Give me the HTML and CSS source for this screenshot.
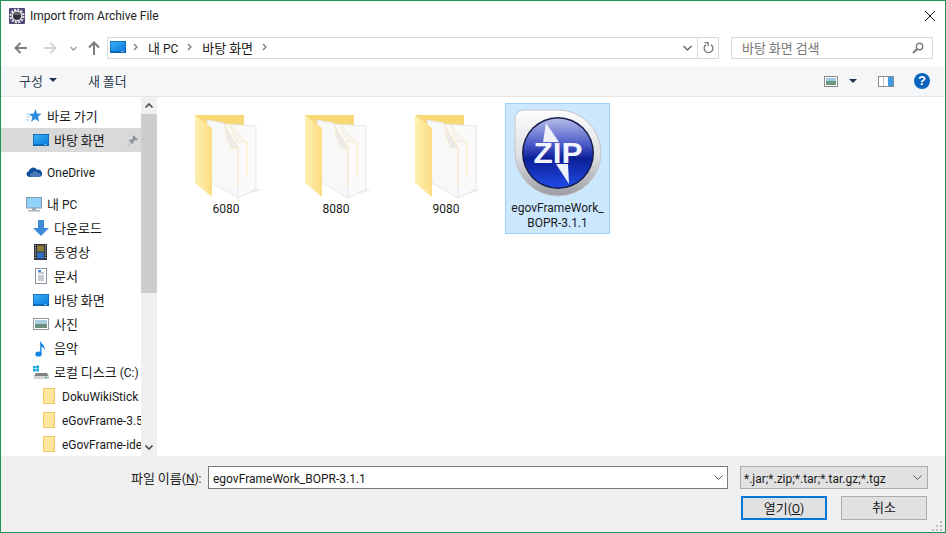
FILE: index.html
```html
<!DOCTYPE html>
<html>
<head>
    <meta charset="utf-8">
    <title>Import from Archive File</title>
    <link rel="stylesheet" href="styles.css">
</head>
<body>
    <svg class="defs" width="0" height="0">
        <defs>
            <linearGradient id="deskFill" x1="0" y1="0" x2="1" y2="1">
                <stop offset="0" stop-color="#39b3f5"/>
                <stop offset="1" stop-color="#0a78dc"/>
            </linearGradient>
            <linearGradient id="flap" x1="0" y1="0" x2="1" y2="0">
                <stop offset="0" stop-color="#fff0b0"/>
                <stop offset="1" stop-color="#fcdc84"/>
            </linearGradient>
            <linearGradient id="ring" x1="0" y1="0" x2="0" y2="1">
                <stop offset="0" stop-color="#fdfdfd"/>
                <stop offset="0.55" stop-color="#dcdde0"/>
                <stop offset="1" stop-color="#9b9ca3"/>
            </linearGradient>
            <linearGradient id="disc" x1="0" y1="0" x2="0" y2="1">
                <stop offset="0" stop-color="#b4bbe8"/>
                <stop offset="0.38" stop-color="#4a59c8"/>
                <stop offset="0.58" stop-color="#0c1f96"/>
                <stop offset="1" stop-color="#1f4ae6"/>
            </linearGradient>
            <symbol id="desk" viewBox="0 0 16 12">
                <rect x="0" y="0" width="16" height="12" fill="#0a5fa8"/>
                <rect x="0.7" y="0.7" width="14.6" height="9.6" fill="url(#deskFill)"/>
                <rect x="0.7" y="10.3" width="14.6" height="1" fill="#0d6dbd"/>
                <rect x="11" y="10.5" width="3" height="0.6" fill="#e8f4ff"/>
            </symbol>
            <symbol id="smallFolder" viewBox="0 0 12 16">
                <rect x="0.5" y="0.5" width="11" height="15" fill="#fde79f" stroke="#eec75f"/>
                <rect x="10" y="11" width="2" height="5" fill="#f7d26f"/>
            </symbol>
            <symbol id="bigFolder" viewBox="-4 0 70 84" overflow="visible">
                <path d="M0 0 H49 V14 H0 Z" fill="#f8d775"/>
                <path d="M28 9 L61 11 V74 L43 83 Z" fill="#fafafa" stroke="#e6e6e6"/>
                <path d="M61 74 L66 75 L50 80 Z" fill="#ececec"/>
                <path d="M52 27 V62" stroke="#fbecbd"/>
                <path d="M34 8 L51 27 L42 27 Z" fill="#f4f4f4" stroke="#f9e6b0" stroke-width="0.6"/>
                <path d="M12 5 L28 8 L43 33 V83 L17 68 Z" fill="#f8f8f9" stroke="#e8e8e8"/>
                <path d="M30 11 L43 33 H36 L31 21 Z" fill="#ebebeb" stroke="#f9e6b0" stroke-width="0.6"/>
                <path d="M43 33 V72" stroke="#fbecbd"/>
                <path d="M0 0 L17 13 V82 L0 68 Z" fill="url(#flap)"/>
            </symbol>
        </defs>
    </svg>

    <div class="window">
        <header class="titlebar">
            <svg class="app-icon" width="16" height="16" viewBox="0 0 16 16">
                <rect width="16" height="16" rx="1" fill="#53477a"/>
                <circle cx="8" cy="8" r="6.4" fill="none" stroke="#e6e6e6" stroke-width="2" stroke-dasharray="2 1.3"/>
                <circle cx="8" cy="8" r="5.4" fill="#e6e6e6"/>
                <circle cx="8" cy="8" r="4" fill="#35303c"/>
                <path d="M4.8 7 a3.4 3.4 0 0 1 6.4 0 z" fill="#6d6a78"/>
            </svg>
            <span class="window-title">Import from Archive File</span>
            <svg class="close-icon" width="10" height="10" viewBox="0 0 10 10">
                <path d="M0 0 L10 10 M10 0 L0 10" stroke="#111" stroke-width="1"/>
            </svg>
        </header>

        <nav class="navbar">
            <div class="nav-buttons">
                <svg class="nav-back" width="13" height="12" viewBox="0 0 13 12"><path d="M13 6 H2 M6.5 1 L1.5 6 L6.5 11" fill="none" stroke="#7d7d7d" stroke-width="2"/></svg>
                <svg class="nav-forward" width="13" height="12" viewBox="0 0 13 12"><path d="M0 6 H11 M6.5 1 L11.5 6 L6.5 11" fill="none" stroke="#d4d4d4" stroke-width="2"/></svg>
                <svg class="nav-chevron" width="7" height="5" viewBox="0 0 7 5"><path d="M0.5 1 L3.5 4 L6.5 1" fill="none" stroke="#9a9a9a" stroke-width="1.3"/></svg>
                <svg class="nav-up" width="12" height="14" viewBox="0 0 12 14"><path d="M6 14 V2 M1 6.5 L6 1.5 L11 6.5" fill="none" stroke="#7d7d7d" stroke-width="2"/></svg>
            </div>
            <div class="address">
                <svg class="address-icon" width="16" height="12"><use href="#desk"/></svg>
                <svg class="crumb-sep" width="5" height="8" viewBox="0 0 5 8"><path d="M1 1 L4 4 L1 7" fill="none" stroke="#7a7a7a" stroke-width="1.3"/></svg>
                <span class="crumb"><span class="ko">내</span> PC</span>
                <svg class="crumb-sep" width="5" height="8" viewBox="0 0 5 8"><path d="M1 1 L4 4 L1 7" fill="none" stroke="#7a7a7a" stroke-width="1.3"/></svg>
                <span class="crumb ko">바탕 화면</span>
                <svg class="crumb-sep" width="5" height="8" viewBox="0 0 5 8"><path d="M1 1 L4 4 L1 7" fill="none" stroke="#7a7a7a" stroke-width="1.3"/></svg>
                <span class="address-fill"></span>
                <svg class="address-drop" width="9" height="6" viewBox="0 0 9 6"><path d="M0.5 1 L4.5 5 L8.5 1" fill="none" stroke="#666" stroke-width="1.4"/></svg>
                <span class="address-refresh">
                    <svg width="11" height="12" viewBox="0 0 11 12"><path d="M3 2.6 A4.4 4.4 0 1 0 8 2.6" fill="none" stroke="#777" stroke-width="1.3"/><path d="M1.6 0.6 H5.2 V4.2" fill="none" stroke="#777" stroke-width="1.2"/></svg>
                </span>
            </div>
            <div class="search">
                <span class="search-text ko">바탕 화면 검색</span>
                <svg width="12" height="12" viewBox="0 0 12 12"><circle cx="7.5" cy="4.5" r="3.2" fill="none" stroke="#7a7a7a" stroke-width="1.4"/><path d="M5 7 L1 11" stroke="#7a7a7a" stroke-width="2"/></svg>
            </div>
        </nav>

        <div class="toolbar">
            <span class="tool ko">구성<i class="caret"></i></span>
            <span class="tool tool-new ko">새 폴더</span>
            <span class="toolbar-fill"></span>
            <svg class="view-icon" width="14" height="11" viewBox="0 0 14 11">
                <rect x="0.5" y="0.5" width="13" height="10" fill="#fff" stroke="#8c8c8c"/>
                <rect x="2" y="2" width="10" height="3" fill="#9fc9e8"/>
                <rect x="2" y="5" width="10" height="4" fill="#6f9a82"/>
            </svg>
            <i class="caret view-caret"></i>
            <svg class="pane-icon" width="16" height="11" viewBox="0 0 16 11">
                <rect x="0.5" y="0.5" width="15" height="10" fill="#fff" stroke="#8c8c8c"/>
                <rect x="10" y="1" width="5" height="9" fill="#3f9be0"/>
                <path d="M5.5 1 V10" stroke="#c4c4c4"/>
            </svg>
            <svg class="help-icon" width="16" height="16" viewBox="0 0 16 16">
                <circle cx="8" cy="8" r="8" fill="#0c63bd"/>
                <text x="8" y="12.4" text-anchor="middle" class="help-mark">?</text>
            </svg>
        </div>

        <div class="content">
            <aside class="sidebar">
                <ul class="tree">
                    <li class="tree-row level-0">
                        <svg class="tree-icon" width="16" height="16" viewBox="0 0 16 16"><path d="M9.5 1 L11 5.6 L15.6 5.8 L12 8.8 L13.2 13.6 L9.2 11 L5 13.8 L6.4 9 L3 6 L7.8 5.6 Z" fill="#2b8ee0"/><path d="M0.5 6 H3 M0.5 9 H4 M0.5 12 H3" stroke="#9ccbf0"/></svg>
                        <span class="label-ko ko">바로 가기</span>
                    </li>
                    <li class="tree-row level-1 selected">
                        <svg class="tree-icon" width="16" height="12"><use href="#desk"/></svg>
                        <span class="grow label-ko ko">바탕 화면</span>
                        <svg class="pin" width="11" height="11" viewBox="0 0 11 11"><path d="M6.5 0.5 L10.5 4.5 L9.5 5 L8 4.6 L5.8 7 L5.6 9 L2 5.4 L4 5.2 L6.4 3 L6 1.5 Z M3.5 7.5 L0.5 10.5" fill="#8a8f96" stroke="#8a8f96" stroke-width="0.6"/></svg>
                    </li>
                    <li class="tree-row level-0 group">
                        <svg class="tree-icon" width="16" height="10" viewBox="0 0 16 10"><path d="M3 10 A3 3 0 0 1 2.6 4.2 A4.6 4.6 0 0 1 11 2.8 A3.6 3.6 0 0 1 13.4 10 Z" fill="#0f4d9c"/><path d="M5 10 A2.4 2.4 0 0 1 6.4 5.6 A3.4 3.4 0 0 1 12 6 A2.2 2.2 0 0 1 13.6 10 Z" fill="#fff" opacity="0.25"/></svg>
                        <span class="label-latin">OneDrive</span>
                    </li>
                    <li class="tree-row level-0 group">
                        <svg class="tree-icon" width="16" height="15" viewBox="0 0 16 15"><rect x="0.5" y="0.5" width="15" height="10.5" fill="#8fd2fa" stroke="#8a9aa8"/><rect x="6" y="11" width="4" height="2" fill="#9aa7b2"/><rect x="2" y="13" width="12" height="1.6" fill="#aeb8c1"/></svg>
                        <span class="label-ko"><span class="ko">내</span> PC</span>
                    </li>
                    <li class="tree-row level-1">
                        <svg class="tree-icon" width="16" height="16" viewBox="0 0 16 16"><path d="M5 0 H11 V8 H16 L8 16 L0 8 H5 Z" fill="#3c8ad8"/></svg>
                        <span class="label-ko ko">다운로드</span>
                    </li>
                    <li class="tree-row level-1">
                        <svg class="tree-icon" width="16" height="16" viewBox="0 0 16 16"><rect x="1" y="0" width="13" height="16" fill="#2d3338"/><rect x="4" y="1.5" width="7" height="6" fill="#8c7a3a"/><rect x="4" y="8.5" width="7" height="6" fill="#2d6fc0"/><path d="M2.5 1 V15 M12.5 1 V15" stroke="#cfd3d6" stroke-dasharray="1 1.4"/></svg>
                        <span class="label-ko ko">동영상</span>
                    </li>
                    <li class="tree-row level-1">
                        <svg class="tree-icon" width="16" height="16" viewBox="0 0 16 16"><rect x="2.5" y="0.5" width="11" height="15" fill="#fff" stroke="#8b96a0"/><path d="M5 5 H11 M5 8 H11 M5 10 H11 M5 12 H11" stroke="#8b9aa8"/><rect x="5" y="2" width="3" height="2" fill="#4a90d8"/></svg>
                        <span class="label-ko ko">문서</span>
                    </li>
                    <li class="tree-row level-1">
                        <svg class="tree-icon" width="16" height="12"><use href="#desk"/></svg>
                        <span class="label-ko ko">바탕 화면</span>
                    </li>
                    <li class="tree-row level-1">
                        <svg class="tree-icon" width="16" height="12" viewBox="0 0 16 12"><rect x="0.5" y="0.5" width="15" height="11" fill="#fff" stroke="#999"/><rect x="2" y="2" width="12" height="4" fill="#a9cde0"/><rect x="2" y="6" width="12" height="4" fill="#6d8f7f"/></svg>
                        <span class="label-ko ko">사진</span>
                    </li>
                    <li class="tree-row level-1">
                        <svg class="tree-icon" width="16" height="17" viewBox="0 0 16 17"><ellipse cx="5.5" cy="14" rx="3.2" ry="2.6" fill="#1482e0"/><path d="M7.2 14 V0.5 C8 4 12.5 5 11.5 10 C10.8 7.6 9.2 6.8 8.6 6.6 V14 Z" fill="#1482e0"/></svg>
                        <span class="label-ko ko">음악</span>
                    </li>
                    <li class="tree-row level-1">
                        <svg class="tree-icon" width="16" height="16" viewBox="0 0 16 16"><path d="M0 2 H2.6 V4.4 H0 Z M3.2 1.6 H6 V4.4 H3.2 Z M0 5 H2.6 V7.4 H0 Z M3.2 5 H6 V7.6 H3.2 Z" fill="#12a3e8"/><path d="M3 9 H14 L15.6 12 V15 H1 V12 Z" fill="#7d8287"/><path d="M1 12 H15.6 V15 H1 Z" fill="#d2d4d6"/><rect x="12" y="13" width="2" height="1" fill="#39b54a"/></svg>
                        <span class="label-ko"><span class="ko">로컬 디스크</span> (C:)</span>
                    </li>
                    <li class="tree-row level-2">
                        <svg class="tree-icon" width="12" height="16"><use href="#smallFolder"/></svg>
                        <span class="label-latin">DokuWikiStick</span>
                    </li>
                    <li class="tree-row level-2">
                        <svg class="tree-icon" width="12" height="16"><use href="#smallFolder"/></svg>
                        <span class="label-latin">eGovFrame-3.5</span>
                    </li>
                    <li class="tree-row level-2">
                        <svg class="tree-icon" width="12" height="16"><use href="#smallFolder"/></svg>
                        <span class="label-latin">eGovFrame-ide</span>
                    </li>
                </ul>
            </aside>
            <div class="scrollbar">
                <span class="scroll-btn">
                    <svg width="8" height="5" viewBox="0 0 8 5"><path d="M0.5 4.5 L4 1 L7.5 4.5" fill="none" stroke="#505050" stroke-width="1.6"/></svg>
                </span>
                <span class="scroll-thumb"></span>
                <span class="scroll-track"></span>
                <span class="scroll-btn">
                    <svg width="8" height="5" viewBox="0 0 8 5"><path d="M0.5 0.5 L4 4 L7.5 0.5" fill="none" stroke="#505050" stroke-width="1.6"/></svg>
                </span>
            </div>
            <main class="files">
                <div class="tile">
                    <svg class="tile-folder" width="70" height="84"><use href="#bigFolder"/></svg>
                    <span class="tile-name">6080</span>
                </div>
                <div class="tile">
                    <svg class="tile-folder" width="70" height="84"><use href="#bigFolder"/></svg>
                    <span class="tile-name">8080</span>
                </div>
                <div class="tile">
                    <svg class="tile-folder" width="70" height="84"><use href="#bigFolder"/></svg>
                    <span class="tile-name">9080</span>
                </div>
                <div class="tile tile-selected">
                    <svg class="tile-zip" width="90" height="90" viewBox="0 0 90 90">
                        <path d="M11 2 H45 A43 43 0 1 1 2 45 V11 A9 9 0 0 1 11 2 Z" fill="url(#ring)" stroke="#c4c5c9"/>
                        <circle cx="45" cy="45" r="36" fill="#171c4a"/>
                        <circle cx="45" cy="45" r="34.5" fill="url(#disc)"/>
                        <path d="M33 15 L46 34 H30 Z" fill="#eef0fa"/>
                        <path d="M43 56 H55 L56 76 Z" fill="#eef0fa"/>
                        <text x="45" y="55" text-anchor="middle" textLength="49" lengthAdjust="spacingAndGlyphs" class="zip-mark">ZIP</text>
                    </svg>
                    <span class="tile-name">egovFrameWork_<br>BOPR-3.1.1</span>
                </div>
            </main>
        </div>

        <footer class="footer">
            <div class="footer-row">
                <label class="file-label"><span class="ko">파일 이름</span>(<u>N</u>):</label>
                <div class="file-input">
                    <span class="grow field-text">egovFrameWork_BOPR-3.1.1</span>
                    <svg width="9" height="5" viewBox="0 0 9 5"><path d="M0.5 0.5 L4.5 4.5 L8.5 0.5" fill="none" stroke="#555"/></svg>
                </div>
                <div class="file-filter">
                    <span class="grow field-text">*.jar;*.zip;*.tar;*.tar.gz;*.tgz</span>
                    <svg width="9" height="5" viewBox="0 0 9 5"><path d="M0.5 0.5 L4.5 4.5 L8.5 0.5" fill="none" stroke="#555"/></svg>
                </div>
            </div>
            <div class="footer-actions">
                <button class="btn btn-default"><span class="ko">열기</span>(<u>O</u>)</button>
                <button class="btn"><span class="ko">취소</span></button>
            </div>
            <svg class="grip" width="11" height="11" viewBox="0 0 11 11">
                <path d="M8 0 h2 v2 h-2 z M4 4 h2 v2 h-2 z M8 4 h2 v2 h-2 z M0 8 h2 v2 h-2 z M4 8 h2 v2 h-2 z M8 8 h2 v2 h-2 z" fill="#bdbdbd"/>
            </svg>
        </footer>
    </div>
</body>
</html>
```

FILE: styles.css
```css
* {
    margin: 0;
    padding: 0;
    box-sizing: border-box;
}

html, body {
    width: 946px;
    height: 533px;
    overflow: hidden;
}

body {
    font-family: Roboto, "Noto Sans CJK KR", sans-serif;
    font-size: 12px;
    color: #1a1a1a;
    background: #fff;
}

svg {
    flex: none;
}

/* hangul runs a size up, latin stays at 12px */
.ko {
    font-family: "Noto Sans CJK KR", sans-serif;
    font-size: 13px;
}

.defs {
    display: block;
    height: 0;
}

.grow {
    flex: 1;
    min-width: 0;
}

.window {
    width: 946px;
    height: 533px;
    display: flex;
    flex-direction: column;
    border: 1px solid #1f9255;
    background: #fff;
}

/* title bar */
.titlebar {
    height: 32px;
    flex: none;
    display: flex;
    align-items: center;
    padding: 0 10px 2px 8px;
}

.app-icon {
    margin-right: 5px;
}

.window-title {
    flex: 1;
    color: #222;
}

/* address row */
.navbar {
    height: 33px;
    flex: none;
    display: flex;
    align-items: flex-start;
    padding-top: 4px;
}

.nav-buttons {
    width: 106px;
    height: 22px;
    flex: none;
    display: flex;
    align-items: center;
    padding-left: 13px;
}

.nav-forward {
    margin-left: 17px;
}

.nav-chevron {
    margin-left: 13px;
}

.nav-up {
    margin-left: 11px;
}

.address {
    width: 612px;
    height: 22px;
    flex: none;
    display: flex;
    align-items: center;
    border: 1px solid #d9d9d9;
    padding-left: 2px;
}

.address-icon {
    margin-right: 7px;
    margin-bottom: 2px;
}

.crumb-sep {
    margin-right: 10px;
    margin-bottom: 2px;
}

.crumb {
    margin-right: 9px;
    margin-bottom: 2px;
    white-space: nowrap;
}

.address-fill {
    flex: 1;
}

.address-drop {
    margin-right: 5px;
}

.address-refresh {
    width: 21px;
    height: 100%;
    display: flex;
    align-items: center;
    justify-content: center;
    border-left: 1px solid #d9d9d9;
}

.search {
    width: 202px;
    height: 22px;
    flex: none;
    margin-left: 12px;
    display: flex;
    align-items: center;
    justify-content: space-between;
    border: 1px solid #d9d9d9;
    padding: 0 8px 0 10px;
    color: #777;
}

.search-text {
    margin-bottom: 2px;
}

/* command bar */
.toolbar {
    height: 31px;
    flex: none;
    display: flex;
    align-items: center;
    background: #f5f6f7;
    border-bottom: 1px solid #e6e6e6;
    padding-left: 18px;
    padding-right: 15px;
    color: #2f3d4f;
}

.tool {
    display: flex;
    align-items: center;
    margin-bottom: 2px;
}

.caret {
    display: block;
    width: 0;
    height: 0;
    margin-left: 6px;
    border-left: 4px solid transparent;
    border-right: 4px solid transparent;
    border-top: 4px solid #1f3553;
}

.tool-new {
    margin-left: 31px;
}

.toolbar-fill {
    flex: 1;
}

.view-caret {
    margin-left: 11px;
}

.pane-icon {
    margin-left: 21px;
}

.help-icon {
    margin-left: 20px;
}

.help-mark {
    font-family: "Liberation Sans", sans-serif;
    font-size: 13px;
    font-weight: 700;
    fill: #fff;
}

/* main area */
.content {
    flex: 1;
    min-height: 0;
    display: flex;
}

.sidebar {
    width: 140px;
    flex: none;
    overflow: hidden;
    padding-top: 7px;
}

.tree {
    list-style: none;
}

.tree-row {
    height: 24px;
    display: flex;
    align-items: center;
    white-space: nowrap;
}

.label-ko {
    padding-bottom: 2px;
}

.label-latin {
    padding-top: 2px;
}

.tree-row.group {
    margin-top: 8px;
}

.tree-row.level-0 {
    padding-left: 25px;
}

.tree-row.level-1 {
    padding-left: 32px;
}

.tree-row.level-2 {
    padding-left: 42px;
}

.tree-row .tree-icon {
    margin-right: 5px;
}

.tree-row.level-2 .tree-icon {
    margin-right: 7px;
}

.tree-row.selected {
    background: #d9d9d9;
}

.pin {
    margin-right: 3px;
}

.scrollbar {
    width: 16px;
    flex: none;
    display: flex;
    flex-direction: column;
    background: #f0f0f0;
}

.scroll-btn {
    height: 17px;
    flex: none;
    display: flex;
    align-items: center;
    justify-content: center;
}

.scroll-thumb {
    height: 179px;
    flex: none;
    background: #cdcdcd;
}

.scroll-track {
    flex: 1;
}

.files {
    flex: 1;
    min-width: 0;
    display: flex;
    align-items: flex-start;
    gap: 6px;
    padding: 6px 0 0 17px;
}

.tile {
    width: 104px;
    height: 131px;
    flex: none;
    display: flex;
    flex-direction: column;
    align-items: center;
    border: 1px solid transparent;
    text-align: center;
    line-height: 16px;
}

.tile-folder {
    margin-top: 11px;
    margin-bottom: 2px;
    overflow: visible;
}

.tile-selected {
    width: 105px;
    margin-left: 1px;
    background: #cce8ff;
    border-color: #99d1ff;
    line-height: 15px;
}

.tile-zip {
    margin-top: 4px;
    margin-bottom: 3px;
}

.zip-mark {
    font-family: "Liberation Sans", sans-serif;
    font-size: 29px;
    font-weight: 700;
    fill: #f2f4ff;
}

/* file name and buttons */
.footer {
    position: relative;
    height: 76px;
    flex: none;
    background: #f0f0f0;
    padding-top: 10px;
}

.footer-row {
    display: flex;
    align-items: center;
    padding-left: 130px;
}

.file-label {
    width: 77px;
    flex: none;
    color: #222;
}

.field-text {
    padding-top: 2px;
}

.file-input {
    width: 520px;
    height: 23px;
    flex: none;
    display: flex;
    align-items: center;
    background: #fff;
    border: 1px solid #7a7a7a;
    padding: 0 4px 0 4px;
}

.file-filter {
    width: 188px;
    height: 23px;
    flex: none;
    margin-left: 12px;
    display: flex;
    align-items: center;
    background: #e1e1e1;
    border: 1px solid #adadad;
    padding: 0 5px 0 3px;
}

.footer-actions {
    display: flex;
    gap: 14px;
    padding-left: 740px;
    margin-top: 7px;
}

.btn {
    width: 86px;
    height: 24px;
    background: #e1e1e1;
    border: 1px solid #adadad;
    font: inherit;
    color: #1a1a1a;
    padding-bottom: 3px;
}

.btn-default {
    border: 2px solid #0078d7;
}

.grip {
    position: absolute;
    right: 2px;
    bottom: 0;
}
```
